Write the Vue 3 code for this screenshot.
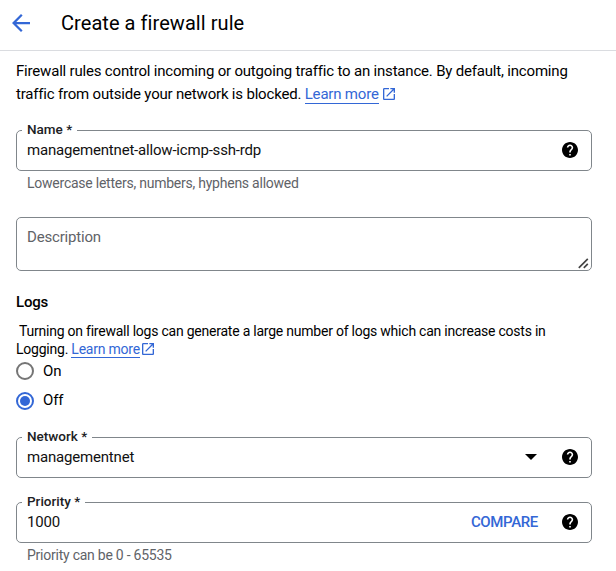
<script setup>
import { ref, h } from 'vue'

const logs = ref('off')

const HelpIcon = () =>
  h('svg', { viewBox: '2 2 20 20', width: 16, height: 16 }, [
    h('path', {
      fill: '#000',
      d: 'M12 2C6.48 2 2 6.48 2 12s4.48 10 10 10 10-4.48 10-10S17.52 2 12 2zm1 17h-2v-2h2v2zm2.07-7.75l-.9.92C13.45 12.9 13 13.5 13 15h-2v-.5c0-1.1.45-2.1 1.17-2.83l1.24-1.26c.37-.36.59-.86.59-1.41 0-1.1-.9-2-2-2s-2 .9-2 2H8c0-2.21 1.79-4 4-4s4 1.79 4 4c0 .88-.36 1.68-.93 2.25z',
    }),
  ])

const ExternalIcon = () =>
  h('svg', { viewBox: '3 3 18 18', width: 12, height: 12 }, [
    h('path', {
      fill: '#3367d6',
      d: 'M19 19H5V5h7V3H5c-1.11 0-2 .9-2 2v14c0 1.1.89 2 2 2h14c1.1 0 2-.9 2-2v-7h-2v7zM14 3v2h3.59l-9.83 9.83 1.41 1.41L19 6.41V10h2V3h-7z',
    }),
  ])
</script>

<template>
  <div class="page">
    <header class="header">
      <svg class="back" viewBox="4 4 16 16" width="18" height="18">
        <path fill="#3367d6" d="M20 11H7.83l5.59-5.59L12 4l-8 8 8 8 1.41-1.41L7.83 13H20v-2z" />
      </svg>
      <h1 class="title">Create a firewall rule</h1>
    </header>

    <main class="form">
      <p class="intro">
        <span class="intro-first">Firewall rules control incoming or outgoing traffic to an instance. By default, incoming</span><br />
        <span class="intro-second">traffic from outside your network is blocked. </span><a class="link">Learn more</a><ExternalIcon class="external" />
      </p>

      <div class="field name">
        <label class="label">Name *</label>
        <span class="value">managementnet-allow-icmp-ssh-rdp</span>
        <HelpIcon />
      </div>
      <p class="hint">Lowercase letters, numbers, hyphens allowed</p>

      <div class="area">
        <span class="placeholder">Description</span>
        <svg class="grip" viewBox="0 0 11 11" width="11" height="11">
          <path d="M0.8 9.8L9.8 0.8M5.8 9.8L9.8 5.8" fill="none" stroke="#444" stroke-width="1.7" />
        </svg>
      </div>

      <h2 class="section">Logs</h2>
      <p class="note">
        <span class="note-first">Turning on firewall logs can generate a large number of logs which can increase costs in</span><br />
        <span class="note-second">Logging. </span><a class="link">Learn more</a><ExternalIcon class="external tight" />
      </p>

      <div class="radios">
        <div class="radio" @click="logs = 'on'">
          <span class="circle" :class="{ checked: logs === 'on' }"></span><span>On</span>
        </div>
        <div class="radio" @click="logs = 'off'">
          <span class="circle" :class="{ checked: logs === 'off' }"></span><span>Off</span>
        </div>
      </div>

      <div class="field network">
        <label class="label">Network *</label>
        <span class="value">managementnet</span>
        <svg class="caret" viewBox="0 0 12 6" width="12" height="6"><path d="M0 0h12L6 6z" /></svg>
        <HelpIcon />
      </div>

      <div class="field priority">
        <label class="label">Priority *</label>
        <span class="value">1000</span>
        <a class="compare">COMPARE</a>
        <HelpIcon />
      </div>
      <p class="hint">Priority can be 0 - 65535</p>
    </main>
  </div>
</template>

<style>
body {
  background: #fff;
}
</style>

<style scoped>
.page {
  box-sizing: border-box;
  width: 616px;
  height: 571px;
  overflow: hidden;
  background: #fff;
  color: #000;
  font-family: Roboto, "Liberation Sans", sans-serif;
  font-size: 15px;
  letter-spacing: -0.19px;
}
h1,
h2,
p {
  margin: 0;
  font-weight: 400;
}
svg {
  display: block;
  flex: none;
}
.header {
  display: flex;
  align-items: center;
  box-sizing: border-box;
  height: 51px;
  padding: 0 0 4px 12px;
  border-bottom: 1px solid #dadce0;
}
.title {
  margin-left: 31px;
  font-size: 20px;
  letter-spacing: 0.06px;
  line-height: 24px;
}
.form {
  padding: 9px 24px 0 16px;
}
.intro {
  line-height: 23px;
  white-space: nowrap;
}
.intro-second,
.note-second {
  white-space: pre;
}
.link {
  color: #3367d6;
  border-bottom: 1px solid #3367d6;
}
.external {
  display: inline-block;
  margin-left: 4px;
  vertical-align: -1px;
}
.external.tight {
  margin-left: 2px;
}
.field {
  position: relative;
  display: flex;
  align-items: center;
  box-sizing: border-box;
  height: 41px;
  padding: 0 13px 1px 10px;
  border: 1px solid #80868b;
  border-radius: 5px;
}
.label {
  position: absolute;
  top: -10px;
  left: 5px;
  padding: 0 5px;
  background: #fff;
  color: #202124;
  font-size: 13.5px;
  font-weight: 500;
  letter-spacing: 0;
  line-height: 16px;
}
.value {
  flex: 1;
  color: #111;
  line-height: 20px;
}
.name {
  margin-top: 24px;
}
.hint {
  margin-top: 3px;
  padding-left: 11px;
  color: #5f6368;
  font-size: 14px;
  letter-spacing: -0.24px;
  line-height: 18px;
}
.area {
  position: relative;
  box-sizing: border-box;
  height: 54px;
  margin-top: 25px;
  padding: 9px 10px;
  border: 1px solid #80868b;
  border-radius: 5px;
  color: #5f6368;
  line-height: 20px;
}
.grip {
  position: absolute;
  right: 2px;
  bottom: 1px;
}
.section {
  margin-top: 21px;
  font-size: 15px;
  font-weight: 500;
  line-height: 20px;
}
.note {
  margin-top: 10px;
  font-size: 14px;
  letter-spacing: -0.23px;
  line-height: 18px;
  white-space: nowrap;
}
.note-first {
  padding-left: 3px;
}
.radios {
  display: grid;
  gap: 11px;
  margin-top: 4px;
}
.radio {
  display: flex;
  align-items: center;
  gap: 9px;
  height: 18px;
}
.circle {
  display: flex;
  box-sizing: border-box;
  width: 18px;
  height: 18px;
  border: 2px solid #757575;
  border-radius: 50%;
}
.circle.checked {
  margin: 1px 0 -1px;
  border-color: #3367d6;
}
.circle.checked::after {
  content: "";
  width: 10px;
  height: 10px;
  margin: 2px;
  border-radius: 50%;
  background: #3367d6;
}
.network {
  margin-top: 28px;
}
.caret {
  margin-right: 25px;
}
.priority {
  margin-top: 24px;
}
.compare {
  margin-right: 24px;
  color: #3367d6;
  font-weight: 500;
  letter-spacing: -0.35px;
}
</style>
